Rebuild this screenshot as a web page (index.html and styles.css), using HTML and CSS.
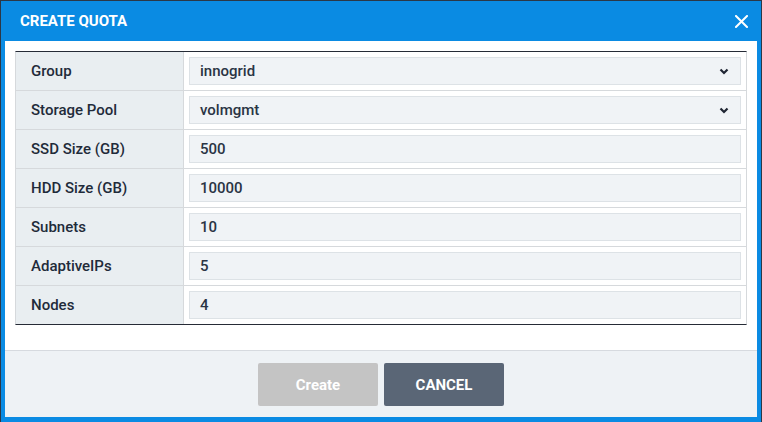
FILE: index.html
```html
<!DOCTYPE html>
<html>
<head>
<meta charset="utf-8">
<link rel="stylesheet" href="styles.css">
</head>
<body>
<div class="modal">
  <div class="header">
    <span class="title">CREATE QUOTA</span>
    <svg class="close" width="13" height="13" viewBox="0 0 13 13"><path d="M1 1L12 12M12 1L1 12" stroke="#fff" stroke-width="2" stroke-linecap="square"/></svg>
  </div>
  <div class="body">
    <div class="table">
      <div class="row"><div class="label">Group</div><div class="cell"><div class="input select"><span>innogrid</span><svg width="10" height="7" viewBox="0 0 10 7"><path d="M1.5 1.5L5 5L8.5 1.5" fill="none" stroke="#1f2533" stroke-width="2.2"/></svg></div></div></div>
      <div class="row"><div class="label">Storage Pool</div><div class="cell"><div class="input select"><span>volmgmt</span><svg width="10" height="7" viewBox="0 0 10 7"><path d="M1.5 1.5L5 5L8.5 1.5" fill="none" stroke="#1f2533" stroke-width="2.2"/></svg></div></div></div>
      <div class="row"><div class="label">SSD Size (GB)</div><div class="cell"><div class="input">500</div></div></div>
      <div class="row"><div class="label">HDD Size (GB)</div><div class="cell"><div class="input">10000</div></div></div>
      <div class="row"><div class="label">Subnets</div><div class="cell"><div class="input">10</div></div></div>
      <div class="row"><div class="label">AdaptiveIPs</div><div class="cell"><div class="input">5</div></div></div>
      <div class="row"><div class="label">Nodes</div><div class="cell"><div class="input">4</div></div></div>
    </div>
  </div>
  <div class="footer">
    <button class="btn create">Create</button>
    <button class="btn cancel">CANCEL</button>
  </div>
</div>
</body>
</html>
```
FILE: styles.css
```css
* { box-sizing: border-box; }
html, body { margin: 0; padding: 0; }
body {
  background: #2b3847;
  width: 762px;
  height: 422px;
  overflow: hidden;
  font-family: Roboto, "Liberation Sans", sans-serif;
}
.modal {
  margin: 1px 0 0 1px;
  width: 760px;
  height: 421px;
  background: #0a8be3;
  padding: 0 4px 5px 4px;
  display: flex;
  flex-direction: column;
}
.header {
  height: 40px;
  display: flex;
  align-items: center;
  justify-content: space-between;
  padding: 0 9px 0 15px;
  color: #fff;
}
.title {
  font-size: 15px;
  font-weight: 700;
}
.close { margin-top: 1px; }
.body {
  background: #fff;
  padding: 10px 10px 25px 10px;
}
.table {
  border-top: 1px solid #262b36;
  border-bottom: 1px solid #262b36;
  border-left: 1px solid #d6d9dc;
  border-right: 1px solid #d6d9dc;
}
.row {
  display: flex;
  height: 39px;
  border-bottom: 1px solid #d6d9dc;
}
.row:last-child { border-bottom: none; height: 38px; }
.label {
  width: 168px;
  background: #e9eef1;
  border-right: 1px solid #d6d9dc;
  padding-left: 15px;
  display: flex;
  align-items: center;
  font-size: 15px;
  font-weight: 500;
  color: #1f2b3a;
}
.cell {
  flex: 1;
  padding: 5px 5px;
  background: #fff;
}
.input {
  height: 28px;
  background: #f0f3f6;
  border: 1px solid #dde2e6;
  padding: 0 10px;
  display: flex;
  align-items: center;
  justify-content: space-between;
  font-size: 15px;
  font-weight: 500;
  color: #2a3444;
}
.select svg { margin-right: 1px; }
.footer {
  flex: 1;
  background: #eef2f5;
  border-top: 1px solid #d6dadf;
  display: flex;
  justify-content: center;
  align-items: flex-start;
  padding-top: 12px;
  gap: 6px;
}
.btn {
  width: 120px;
  height: 43px;
  border: none;
  border-radius: 2px;
  color: #fff;
  font-family: Roboto, "Liberation Sans", sans-serif;
  font-size: 15px;
  font-weight: 700;
  padding: 0;
}
.create { background: #c4c4c4; }
.cancel { background: #5a6676; }
```
